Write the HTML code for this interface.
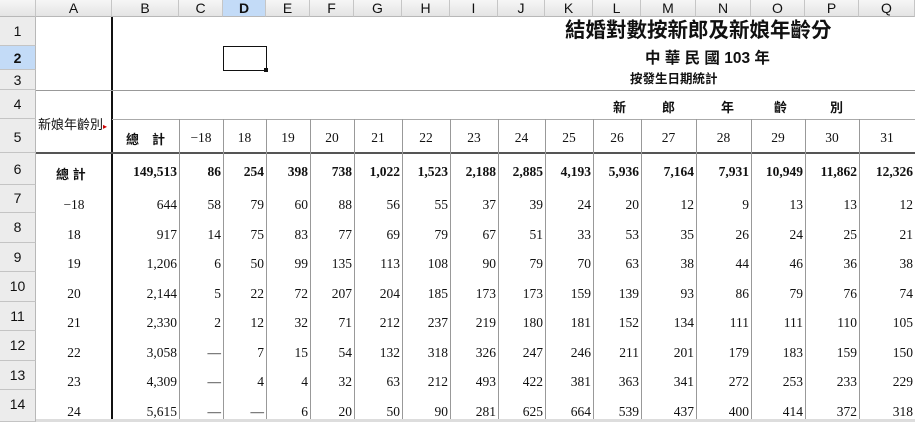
<!DOCTYPE html>
<html><head><meta charset="utf-8"><style>
*{margin:0;padding:0;box-sizing:border-box}
body{width:915px;height:422px;overflow:hidden;background:#fff;position:relative;font-family:"Liberation Serif","Noto Serif CJK SC",serif}
div{position:absolute}
.hd{top:0;height:17px;background:linear-gradient(#f6f6f6,#e4e4e4);border-right:1px solid #c6c6c6;border-bottom:1px solid #b8b8b8;font:14px "Liberation Sans",sans-serif;text-align:center;line-height:17px;color:#111}
.rh{left:0;width:36px;background:#ececec;border-bottom:1px solid #c4c4c4;border-right:1px solid #b8b8b8;font:14px "Liberation Sans",sans-serif;text-align:center;color:#111;padding-top:6px}
.sel{background:#c3dbf7;font-weight:bold}
.v{width:1px;top:119px;height:303px;background:#999}
.h{height:1px;background:#aaa}
i{position:absolute;font-style:normal;font-size:13.5px;text-align:right;padding-right:2px;line-height:16px;color:#111}
.b i{font-weight:bold}
.hr i{text-align:center;padding:0}
.cA{left:36px;width:76px;text-align:center!important;padding:0!important}
.cB{left:112px;width:67px}.cC{left:179px;width:44px}.cD{left:223px;width:43px}.cE{left:266px;width:44px}
.cF{left:310px;width:44px}.cG{left:354px;width:48px}.cH{left:402px;width:48px}.cI{left:450px;width:48px}
.cJ{left:498px;width:47px}.cK{left:545px;width:48px}.cL{left:593px;width:48px}.cM{left:641px;width:55px}
.cN{left:696px;width:55px}.cO{left:751px;width:54px}.cP{left:805px;width:54px}.cQ{left:859px;width:56px}
.r5{top:130px}.r6{top:164px}.r7{top:197px}.r8{top:227px}.r9{top:256px}.r10{top:286px}.r11{top:315px}.r12{top:345px}.r13{top:374px}.r14{top:404px}
.cj{font-family:"Liberation Sans","Noto Sans CJK TC",sans-serif;font-weight:bold;color:#111;white-space:nowrap}
</style></head><body>
<div class="hd" style="left:0;width:36px"></div>
<div class="hd" style="left:36px;width:76px">A</div>
<div class="hd" style="left:112px;width:67px">B</div>
<div class="hd" style="left:179px;width:44px">C</div>
<div class="hd sel" style="left:223px;width:43px">D</div>
<div class="hd" style="left:266px;width:44px">E</div>
<div class="hd" style="left:310px;width:44px">F</div>
<div class="hd" style="left:354px;width:48px">G</div>
<div class="hd" style="left:402px;width:48px">H</div>
<div class="hd" style="left:450px;width:48px">I</div>
<div class="hd" style="left:498px;width:47px">J</div>
<div class="hd" style="left:545px;width:48px">K</div>
<div class="hd" style="left:593px;width:48px">L</div>
<div class="hd" style="left:641px;width:55px">M</div>
<div class="hd" style="left:696px;width:55px">N</div>
<div class="hd" style="left:751px;width:54px">O</div>
<div class="hd" style="left:805px;width:54px">P</div>
<div class="hd" style="left:859px;width:56px">Q</div>
<div class="rh" style="top:17px;height:29px">1</div>
<div class="rh sel" style="top:46px;height:24px;padding-top:4px">2</div>
<div class="rh" style="top:70px;height:20px;padding-top:2px">3</div>
<div class="rh" style="top:90px;height:29px">4</div>
<div class="rh" style="top:119px;height:34px;padding-top:10px">5</div>
<div class="rh" style="top:153px;height:32px;padding-top:8px">6</div>
<div class="rh" style="top:185px;height:28px;padding-top:5px">7</div>
<div class="rh" style="top:213px;height:30px">8</div>
<div class="rh" style="top:243px;height:29px">9</div>
<div class="rh" style="top:272px;height:30px">10</div>
<div class="rh" style="top:302px;height:29px">11</div>
<div class="rh" style="top:331px;height:30px">12</div>
<div class="rh" style="top:361px;height:29px">13</div>
<div class="rh" style="top:390px;height:32px">14</div>
<div style="left:111px;top:17px;width:2px;height:405px;background:#111"></div>
<div class="h" style="left:36px;top:90px;width:879px;background:#999"></div>
<div class="h" style="left:112px;top:119px;width:803px"></div>
<div style="left:36px;top:152px;width:879px;height:2px;background:#555"></div>
<div class="v" style="left:179px"></div><div class="v" style="left:223px"></div><div class="v" style="left:266px"></div>
<div class="v" style="left:310px"></div><div class="v" style="left:354px"></div><div class="v" style="left:402px"></div>
<div class="v" style="left:450px"></div><div class="v" style="left:498px"></div><div class="v" style="left:545px"></div>
<div class="v" style="left:593px"></div><div class="v" style="left:641px"></div><div class="v" style="left:696px"></div>
<div class="v" style="left:751px"></div><div class="v" style="left:805px"></div><div class="v" style="left:859px"></div>
<div class="h" style="left:36px;top:419px;width:879px;background:#ddd;height:3px"></div>
<div style="left:223px;top:46px;width:44px;height:25px;border:1.5px solid #111"></div>
<div style="left:264px;top:68px;width:4px;height:4px;background:#111"></div>
<div class="cj" style="left:565px;top:17px;font-size:20.5px;line-height:28px">結婚對數按新郎及新娘年齡分</div>
<div class="cj" style="left:645px;top:49px;font-size:15.5px;line-height:20px">中 華 民 國 103 年</div>
<div class="cj" style="left:630px;top:71px;font-size:12.5px;line-height:16px">按發生日期統計</div>
<div class="cj" style="left:613px;top:97px;font-size:13px">新</div>
<div class="cj" style="left:662px;top:97px;font-size:13px">郎</div>
<div class="cj" style="left:721px;top:97px;font-size:13px">年</div>
<div class="cj" style="left:774px;top:97px;font-size:13px">齡</div>
<div class="cj" style="left:830px;top:97px;font-size:13px">別</div>
<div class="cj" style="left:38px;top:114px;font-size:13px;font-weight:normal">新娘年齡別<span style="color:#c00;font-size:8px">▸</span></div>
<div class="cj" style="left:126px;top:129px;font-size:13px">總　計</div>
<div class="cj" style="left:56px;top:164px;font-size:13px">總 計</div>
<div class="hr" style="left:0;top:0;width:915px;height:422px">
<i class="cC r5">−18</i><i class="cD r5">18</i><i class="cE r5">19</i><i class="cF r5">20</i><i class="cG r5">21</i><i class="cH r5">22</i><i class="cI r5">23</i><i class="cJ r5">24</i><i class="cK r5">25</i><i class="cL r5">26</i><i class="cM r5">27</i><i class="cN r5">28</i><i class="cO r5">29</i><i class="cP r5">30</i><i class="cQ r5">31</i>
</div>
<div class="b" style="left:0;top:0;width:915px;height:422px">
<i class="cB r6">149,513</i><i class="cC r6">86</i><i class="cD r6">254</i><i class="cE r6">398</i><i class="cF r6">738</i><i class="cG r6">1,022</i><i class="cH r6">1,523</i><i class="cI r6">2,188</i><i class="cJ r6">2,885</i><i class="cK r6">4,193</i><i class="cL r6">5,936</i><i class="cM r6">7,164</i><i class="cN r6">7,931</i><i class="cO r6">10,949</i><i class="cP r6">11,862</i><i class="cQ r6">12,326</i>
</div>
<i class="cA r7">−18</i><i class="cB r7">644</i><i class="cC r7">58</i><i class="cD r7">79</i><i class="cE r7">60</i><i class="cF r7">88</i><i class="cG r7">56</i><i class="cH r7">55</i><i class="cI r7">37</i><i class="cJ r7">39</i><i class="cK r7">24</i><i class="cL r7">20</i><i class="cM r7">12</i><i class="cN r7">9</i><i class="cO r7">13</i><i class="cP r7">13</i><i class="cQ r7">12</i>
<i class="cA r8">18</i><i class="cB r8">917</i><i class="cC r8">14</i><i class="cD r8">75</i><i class="cE r8">83</i><i class="cF r8">77</i><i class="cG r8">69</i><i class="cH r8">79</i><i class="cI r8">67</i><i class="cJ r8">51</i><i class="cK r8">33</i><i class="cL r8">53</i><i class="cM r8">35</i><i class="cN r8">26</i><i class="cO r8">24</i><i class="cP r8">25</i><i class="cQ r8">21</i>
<i class="cA r9">19</i><i class="cB r9">1,206</i><i class="cC r9">6</i><i class="cD r9">50</i><i class="cE r9">99</i><i class="cF r9">135</i><i class="cG r9">113</i><i class="cH r9">108</i><i class="cI r9">90</i><i class="cJ r9">79</i><i class="cK r9">70</i><i class="cL r9">63</i><i class="cM r9">38</i><i class="cN r9">44</i><i class="cO r9">46</i><i class="cP r9">36</i><i class="cQ r9">38</i>
<i class="cA r10">20</i><i class="cB r10">2,144</i><i class="cC r10">5</i><i class="cD r10">22</i><i class="cE r10">72</i><i class="cF r10">207</i><i class="cG r10">204</i><i class="cH r10">185</i><i class="cI r10">173</i><i class="cJ r10">173</i><i class="cK r10">159</i><i class="cL r10">139</i><i class="cM r10">93</i><i class="cN r10">86</i><i class="cO r10">79</i><i class="cP r10">76</i><i class="cQ r10">74</i>
<i class="cA r11">21</i><i class="cB r11">2,330</i><i class="cC r11">2</i><i class="cD r11">12</i><i class="cE r11">32</i><i class="cF r11">71</i><i class="cG r11">212</i><i class="cH r11">237</i><i class="cI r11">219</i><i class="cJ r11">180</i><i class="cK r11">181</i><i class="cL r11">152</i><i class="cM r11">134</i><i class="cN r11">111</i><i class="cO r11">111</i><i class="cP r11">110</i><i class="cQ r11">105</i>
<i class="cA r12">22</i><i class="cB r12">3,058</i><i class="cC r12">—</i><i class="cD r12">7</i><i class="cE r12">15</i><i class="cF r12">54</i><i class="cG r12">132</i><i class="cH r12">318</i><i class="cI r12">326</i><i class="cJ r12">247</i><i class="cK r12">246</i><i class="cL r12">211</i><i class="cM r12">201</i><i class="cN r12">179</i><i class="cO r12">183</i><i class="cP r12">159</i><i class="cQ r12">150</i>
<i class="cA r13">23</i><i class="cB r13">4,309</i><i class="cC r13">—</i><i class="cD r13">4</i><i class="cE r13">4</i><i class="cF r13">32</i><i class="cG r13">63</i><i class="cH r13">212</i><i class="cI r13">493</i><i class="cJ r13">422</i><i class="cK r13">381</i><i class="cL r13">363</i><i class="cM r13">341</i><i class="cN r13">272</i><i class="cO r13">253</i><i class="cP r13">233</i><i class="cQ r13">229</i>
<i class="cA r14">24</i><i class="cB r14">5,615</i><i class="cC r14">—</i><i class="cD r14">—</i><i class="cE r14">6</i><i class="cF r14">20</i><i class="cG r14">50</i><i class="cH r14">90</i><i class="cI r14">281</i><i class="cJ r14">625</i><i class="cK r14">664</i><i class="cL r14">539</i><i class="cM r14">437</i><i class="cN r14">400</i><i class="cO r14">414</i><i class="cP r14">372</i><i class="cQ r14">318</i>
</body></html>
